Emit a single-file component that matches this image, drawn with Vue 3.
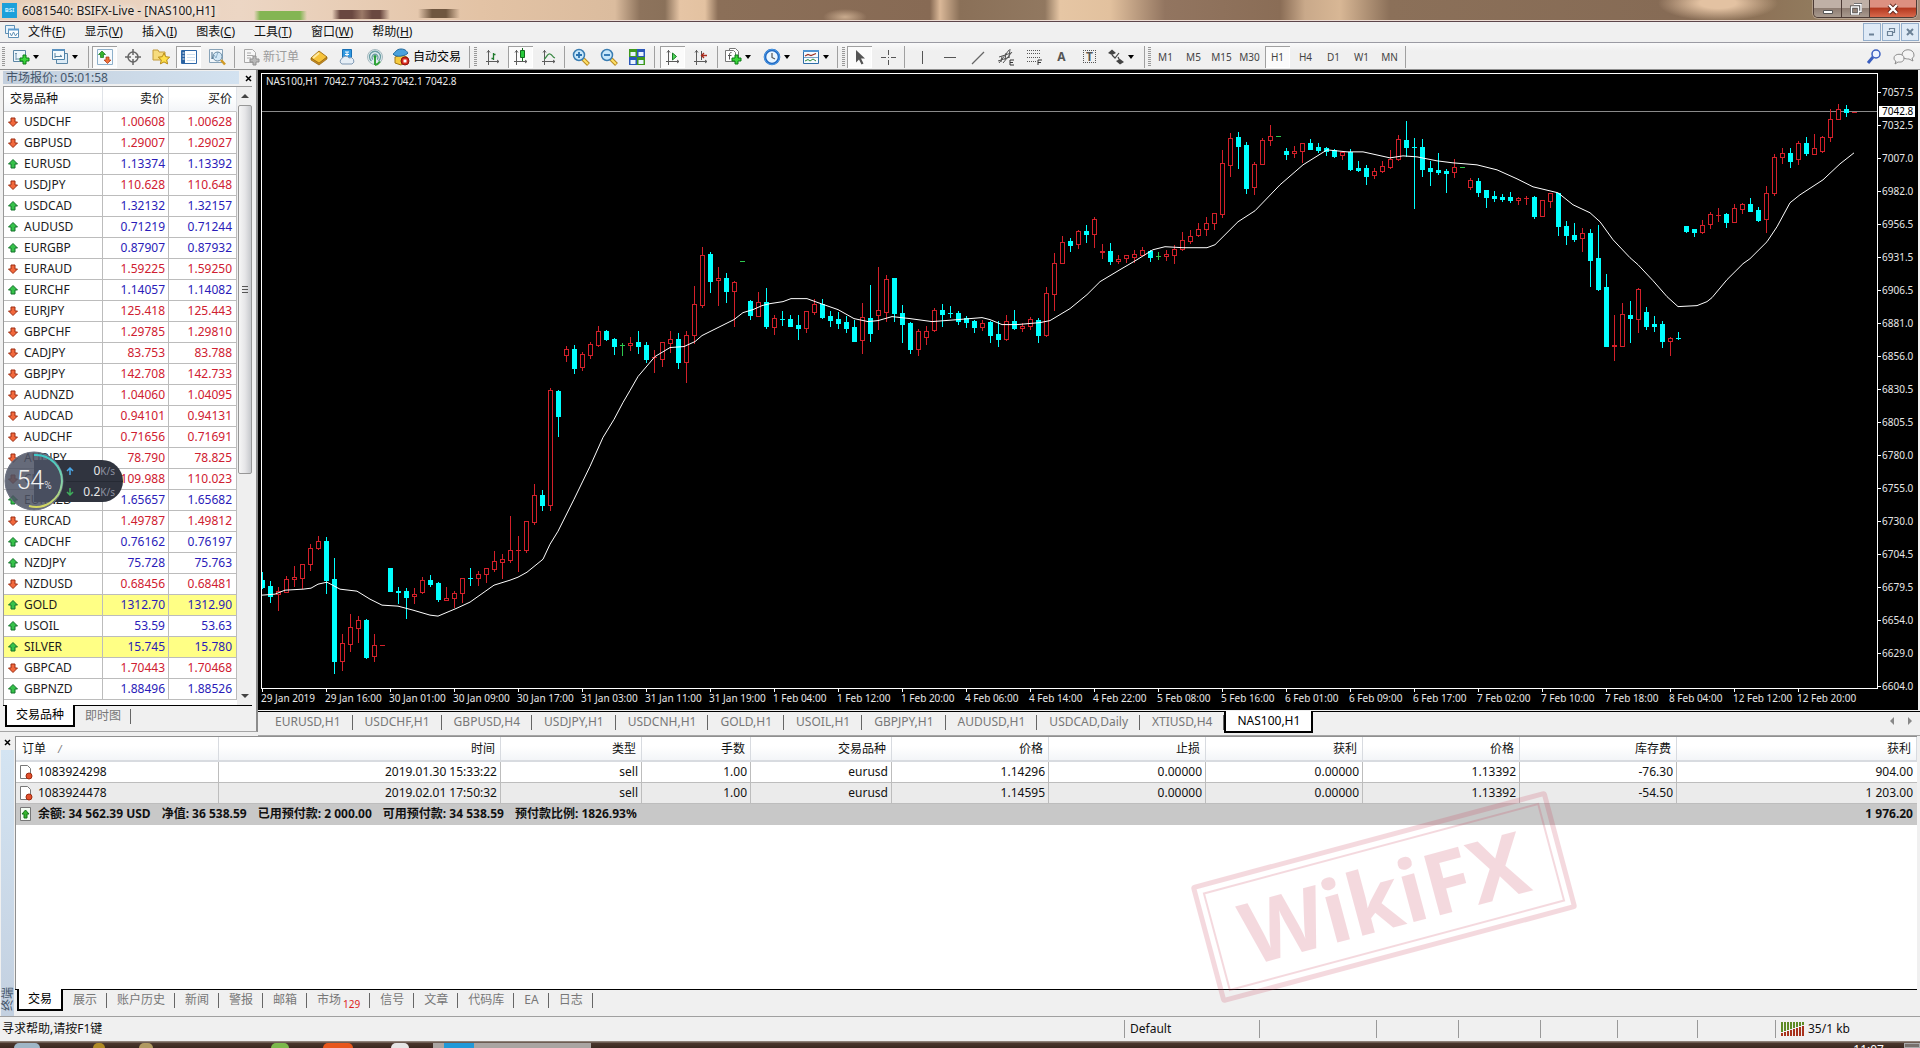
<script setup>
const menus = [['文件', 'F'], ['显示', 'V'], ['插入', 'I'], ['图表', 'C'], ['工具', 'T'], ['窗口', 'W'], ['帮助', 'H']]

const axes = '<path d="M4.5 2v14M2 13.5h13M3 4.5l1.500-2 1.500 2M13 12l2 1.500-2 1.500M4.500 16v1" fill="none" stroke="#5c5c5c"/>'
const plus = '<path d="M11 7h3v3h3v3h-3v3h-3v-3H8v-3h3z" fill="#3bd63b" stroke="#0b7a16"/>'
const icons = {
  chartNew: '<path d="M1.500 2.500h12v11h-12z" fill="#eef6fc" stroke="#5b86a5"/><path d="M4 5v7M3 6l1-1 1 1M4 11h6" stroke="#6f93ad" fill="none"/>' + plus,
  profiles: '<path d="M5.500 5.500h11v10h-11z" fill="#dcebf6" stroke="#5b86a5"/><path d="M1.500 1.500h12v10h-12z" fill="#f4fafd" stroke="#4d81a8"/><path d="M1 2h13" stroke="#5b93c1" stroke-width="2"/><path d="M4 5v5M4 8.500h7M9 7l2 1.500" fill="none" stroke="#5b86a5"/>',
  watch: '<path d="M1.500 1.500h15v15h-15z" fill="#f5fafe" stroke="#8eb0ca"/><path d="M6 3l3.500 3.500H7.500v3h-3v-3H2.500z" fill="#35b52c" stroke="#14751a" stroke-width=".7"/><path d="M11.500 15.500L8 12h2V9h3v3h2z" fill="#f0713a" stroke="#a33413" stroke-width=".7"/>',
  target: '<circle cx="9" cy="9" r="5" fill="none" stroke="#666" stroke-width="1.500"/><path d="M9 1v6M9 11v6M1 9h6M11 9h6" stroke="#666" stroke-width="1.500"/>',
  star: '<path d="M1 2h5l1 2h6v8H1z" fill="#f7dc7d" stroke="#c29a3a"/><path d="M12 5l1.700 3.700 4 .5-3 2.700.9 4-3.600-2-3.600 2 .9-4-3-2.700 4-.5z" fill="#ffe04a" stroke="#b78a16"/>',
  navigator: '<path d="M1.500 2.500h15v13h-15z" fill="#fff" stroke="#2f68a8"/><path d="M2 3h3v12H2z" fill="#2b62a0"/><path d="M7 6.500h8M7 9.500h8M7 12.500h8" stroke="#cfe0ef"/><path d="M2.500 5h2M2.500 8h2M2.500 11h2" stroke="#fff"/>',
  tester: '<path d="M1.500 1.500h13v13h-13z" fill="#f1f6fa" stroke="#88a3b8"/><path d="M4 4v7l2-4 2 3 2-6" fill="none" stroke="#476e8d"/><circle cx="9.500" cy="8.500" r="4.500" fill="#bfe0f5" fill-opacity=".6" stroke="#6a8aa2"/><path d="M13 12l4 4.500" stroke="#d09a25" stroke-width="2.500"/>',
  order: '<path d="M2.500 1.500h8l3 3v10h-11z" fill="#f6f6f6" stroke="#a8a8a8"/><path d="M5 5h4M5 7.500h6M5 10h4" stroke="#a8a8a8"/><path d="M11 8h3v3h3v3h-3v3h-3v-3H8v-3h3z" fill="#b9b9b9" stroke="#8f8f8f"/>',
  book: '<path d="M1 10l8-7 8 6-8 7z" fill="#f6c33b" stroke="#a8771a"/><path d="M1 10v2l8 5 8-6V9l-8 6z" fill="#c98d1e" stroke="#8f6312" stroke-width=".7"/><path d="M3 10l6-5" stroke="#ffeaa0" stroke-width="2"/>',
  cloud: '<path d="M4.500 1.500h9v9h-9z" fill="#2f97e0" stroke="#1870b5"/><path d="M7 4h4M7 6.500h4M9 4v5" stroke="#fff"/><path d="M4 16a3 3 0 0 1 0-5.500 4 4 0 0 1 7-.5 3 3 0 0 1 3 6z" fill="#e6eef6" stroke="#7f98b3"/>',
  signal: '<circle cx="9" cy="9" r="7.500" fill="#e3eef0" stroke="#a7b9bf"/><path d="M5.500 13a5.500 5.500 0 1 1 7 0M7 11.500a3 3 0 1 1 4 0" fill="none" stroke="#6d9ea5" stroke-width="1.300"/><path d="M9 9v8M9 17a8 8 0 0 0 5-3.500" fill="none" stroke="#31a43a" stroke-width="2"/><circle cx="9" cy="8.500" r="1.500" fill="#27983a"/>',
  auto: '<path d="M3 9l6-2 6 2v4l-6 4-6-2z" fill="#f6cb3f" stroke="#a37918"/><path d="M1 6c2-1 3-5 8-5s6 3 7 4c-2 3-12 5-15 1z" fill="#4ba1dc" stroke="#226a9c"/><circle cx="13" cy="13" r="4" fill="#d7281c" stroke="#8d150e"/><path d="M11.500 11.500h3v3h-3z" fill="#fff"/>',
  bars: axes + '<path d="M9.500 5v7M7.500 10.500h2M9.500 6.500h2" stroke="#1f7a2c" fill="none" stroke-width="1.300"/>',
  candles: axes + '<path d="M10.500 0v13" stroke="#136b1c"/><path d="M8.500 2.500h4v7h-4z" fill="#27c93a" stroke="#136b1c"/>',
  line: axes + '<path d="M4 11c3-1 3-6 6-5s2 3 5 4" fill="none" stroke="#3b8a45" stroke-width="1.300"/>',
  zoomIn: '<path d="M11 11l5.500 5.500" stroke="#b98a21" stroke-width="4"/><path d="M11 11l5 5" stroke="#ffe168" stroke-width="2"/><circle cx="7" cy="7" r="5.500" fill="#c8e8fb" stroke="#3a7db2" stroke-width="1.500"/><path d="M7 4v6M4 7h6" stroke="#2a72b0" stroke-width="1.800"/>',
  zoomOut: '<path d="M11 11l5.500 5.500" stroke="#b98a21" stroke-width="4"/><path d="M11 11l5 5" stroke="#ffe168" stroke-width="2"/><circle cx="7" cy="7" r="5.500" fill="#c8e8fb" stroke="#3a7db2" stroke-width="1.500"/><path d="M4 7h6" stroke="#2a72b0" stroke-width="1.800"/>',
  tiles: '<path d="M1 1h8v8H1z" fill="#3f9a1e"/><path d="M9 1h8v8H9z" fill="#2b58ba"/><path d="M1 9h8v8H1z" fill="#2b58ba"/><path d="M9 9h8v8H9z" fill="#3f9a1e"/><path d="M2.500 4h5v4h-5zM10.500 4h5v4h-5zM2.500 12h5v4h-5zM10.500 12h5v4h-5z" fill="#eaf4ff"/>',
  scroll: axes + '<path d="M8.500 5l4 3.500-4 3.500z" fill="#4fd65b" stroke="#1b7d27"/>',
  shift: axes + '<path d="M9.500 3v9" stroke="#555"/><path d="M15 7.500h-5M12 5l-2.500 2.500L12 10" fill="none" stroke="#a72a1c" stroke-width="1.300"/>',
  indicator: '<path d="M5.500 3.500V.5h6l3 3v9h-3" fill="#fff" stroke="#777"/><path d="M1.500 2.500h8l2 2v9h-10z" fill="#fff" stroke="#777"/><path d="M7.500 4.500c-2 0-2 1-2 3v4M4 7.500h3.500" fill="none" stroke="#555"/>' + plus,
  clock: '<circle cx="9" cy="9" r="7" fill="#eaf6ff" stroke="#1e66c0" stroke-width="2.600"/><circle cx="9" cy="9" r="7.500" fill="none" stroke="#59aaf0" stroke-width=".8"/><path d="M9 5v4.500l3 1.500" fill="none" stroke="#555" stroke-width="1.200"/>',
  template: '<path d="M1.500 2.500h15v13h-15z" fill="#f7fbff" stroke="#2f6ea9"/><path d="M1 3h16" stroke="#4f94d2" stroke-width="2"/><path d="M3 8l3-1.500 3 1 5-2" fill="none" stroke="#9a3325" stroke-width="1.200"/><path d="M2 9.500h14" stroke="#7aa4c8"/><path d="M3 13l3-1.500 2 1.500 3-2 3 2" fill="none" stroke="#2c8a3a"/>',
  cursor: '<path d="M5 2l9 8.500H10l2.500 5-2 1-2.500-5-3 3z" fill="#555"/>',
  cross: '<path d="M9.500 2v5M9.500 12v5M2 9.500h5M12 9.500h5" stroke="#555"/><path d="M9 9h1v1H9z" fill="#555"/>',
  vline: '<path d="M9.500 3v13" stroke="#555"/>',
  hline: '<path d="M3 9.500h12" stroke="#555"/>',
  trend: '<path d="M3 16L15 4" stroke="#666" stroke-width="1.200"/>',
  channel: '<path d="M2 15L12 2M6 15L15 4M2 9l12-4M1 13l12-4M5 8l-1 6M9 5l-1 7M13 1l-1 8" fill="none" stroke="#555"/><path d="M13 12h4M13 14.500h3M13 17h4M13 12v5" stroke="#333" fill="none"/>',
  fib: '<path d="M2 2.500h14M2 5.500h14M2 9.500h14M2 13.500h9" stroke="#555" stroke-dasharray="1 1"/><path d="M13 12v5M13 12h4M13 14.500h3" stroke="#333" fill="none"/>',
  arrows: '<path d="M1 5l4-3.500L9 5 5 7zM9 13l4-2 4 3-4 2.500z" fill="#444"/><path d="M5 7l3 3 4-5M11 9l2 4" fill="none" stroke="#444" stroke-width="1.200"/>',
}

// w: slot width; kind: grip | sep; drop: has a caret; on: pressed state
const tools = [
  { kind: 'grip', w: 8 },
  { icon: 'chartNew', drop: 1, w: 39, label: 'New chart' }, { icon: 'profiles', drop: 1, w: 39, label: 'Profiles' },
  { kind: 'sep', w: 4 },
  { icon: 'watch', on: 1, label: 'Market watch' }, { icon: 'target', label: 'Data window' }, { icon: 'star', label: 'Favourites' },
  { icon: 'navigator', on: 1, label: 'Terminal' }, { icon: 'tester', label: 'Strategy tester' },
  { kind: 'sep', w: 8 },
  { icon: 'order', text: '新订单', w: 66, off: 1 }, { icon: 'book', label: 'MetaEditor' }, { icon: 'cloud', label: 'Cloud' },
  { icon: 'signal', label: 'Signals' }, { icon: 'auto', text: '自动交易', w: 78 },
  { kind: 'sep', w: 6 }, { kind: 'grip', w: 6 },
  { icon: 'bars', label: 'Bars' }, { icon: 'candles', on: 1, label: 'Candles' }, { icon: 'line', label: 'Line' },
  { kind: 'sep', w: 4 },
  { icon: 'zoomIn', label: 'Zoom in' }, { icon: 'zoomOut', label: 'Zoom out' }, { icon: 'tiles', label: 'Tile windows' },
  { kind: 'sep', w: 8 },
  { icon: 'scroll', on: 1, label: 'Auto scroll' }, { icon: 'shift', label: 'Chart shift' },
  { kind: 'sep', w: 6 },
  { icon: 'indicator', drop: 1, w: 39, label: 'Indicators' }, { icon: 'clock', drop: 1, w: 39, label: 'Periods' }, { icon: 'template', drop: 1, w: 37, label: 'Templates' },
  { kind: 'sep', w: 5 }, { kind: 'grip', w: 5 },
  { icon: 'cursor', on: 1, label: 'Cursor' }, { icon: 'cross', label: 'Crosshair' },
  { kind: 'sep', w: 6 },
  { icon: 'vline', label: 'Vertical line' }, { icon: 'hline', label: 'Horizontal line' }, { icon: 'trend', label: 'Trendline' },
  { icon: 'channel', label: 'Channel' }, { icon: 'fib', label: 'Fibonacci' },
  { glyph: 'A' }, { glyph: 'T', boxed: 1 }, { icon: 'arrows', drop: 1, w: 39, label: 'Arrows' },
  { kind: 'sep', w: 4 }, { kind: 'grip', w: 5 },
  ...['M1', 'M5', 'M15', 'M30', 'H1', 'H4', 'D1', 'W1', 'MN'].map(p => ({ period: p, on: p === 'H1' })),
  { kind: 'sep', w: 4 },
]

const quotes = `USDCHF d 1.00608 1.00628
GBPUSD d 1.29007 1.29027
EURUSD u 1.13374 1.13392
USDJPY d 110.628 110.648
USDCAD u 1.32132 1.32157
AUDUSD u 0.71219 0.71244
EURGBP u 0.87907 0.87932
EURAUD d 1.59225 1.59250
EURCHF u 1.14057 1.14082
EURJPY d 125.418 125.443
GBPCHF d 1.29785 1.29810
CADJPY d 83.753 83.788
GBPJPY d 142.708 142.733
AUDNZD d 1.04060 1.04095
AUDCAD d 0.94101 0.94131
AUDCHF d 0.71656 0.71691
AUDJPY d 78.790 78.825
CHFJPY d 109.988 110.023
EURNZD u 1.65657 1.65682
EURCAD d 1.49787 1.49812
CADCHF u 0.76162 0.76197
NZDJPY u 75.728 75.763
NZDUSD d 0.68456 0.68481
GOLD u 1312.70 1312.90
USOIL u 53.59 53.63
SILVER u 15.745 15.780
GBPCAD d 1.70443 1.70468
GBPNZD u 1.88496 1.88526`.split('\n').map(r => {
  const [name, dir, bid, ask] = r.split(' ')
  return { name, dir, bid, ask, hot: name === 'GOLD' || name === 'SILVER' }
})

// r: rising, c: falling, g: unchanged; values are high, body top, body bottom, low
const candles = `c573,581,588,589 c582,587,597,603 r588,592,595,611 r577,580,593,593 r567,578,580,587 r565,565,579,589 r545,549,565,571 r537,542,549,550
c538,542,581,594 c559,580,662,674 r635,644,662,671 r615,628,645,652 r617,621,629,643 c620,621,658,659 r635,646,657,662 r646,646,646,646
c569,569,592,592 c588,592,593,604 c589,592,598,619 r589,595,597,604 r578,581,593,594 c576,581,585,587 c583,584,600,602 r588,599,601,601
r592,594,599,608 r579,579,594,603 c569,579,579,586 r572,575,579,586 r569,569,575,583 r552,562,570,572 r555,560,563,579 r517,551,561,563
r537,551,551,572 r522,522,551,553 r485,496,523,525 c491,496,506,511 r389,391,506,511 c391,392,417,437 r346,349,355,361 c345,349,368,373
r352,354,367,370 r342,344,355,358 r326,331,345,346 c330,331,339,340 c338,339,346,354 g343,345,345,355 r337,343,345,350 c331,342,346,353
c342,345,359,362 r350,357,357,372 r342,342,359,366 r331,339,343,352 c333,339,362,368 r331,335,362,383 r286,304,335,343 r247,255,305,307
c252,254,281,292 r267,278,280,305 c273,278,291,302 r281,282,291,326 g261,261,261,261 c300,301,315,319 r292,302,316,316 c288,302,326,328
r315,318,327,334 c311,319,319,325 c315,319,326,326 c315,325,328,339 r311,311,328,332 r299,304,312,314 c299,304,317,318 c311,316,320,326
c312,319,323,328 c316,322,328,332 c320,327,341,341 r303,317,340,353 c285,318,333,341 r267,310,315,329 r275,279,312,321 c278,278,313,321
c305,313,324,342 c322,323,349,353 r329,331,349,355 r326,331,337,344 r308,310,330,331 c304,310,314,326 c306,313,313,317 c311,313,321,324
c316,318,322,327 c320,321,327,332 r320,323,327,330 c321,322,335,342 c321,334,339,346 r315,321,339,340 c310,321,328,329 r323,326,328,331
r317,319,326,329 c318,320,335,342 r287,293,335,336 r253,263,294,310 r236,242,263,263 c238,241,245,251 r230,231,244,248 c225,231,234,242
r217,219,234,247 r244,251,252,258 c243,251,261,264 r255,259,261,263 r255,255,258,262 r250,254,257,262 r247,250,255,255 c250,251,257,261
g252,256,256,259 r250,254,256,260 r245,249,255,263 r232,240,249,250 r230,236,241,243 r223,229,235,236 r217,223,229,235 r213,213,223,229
r150,163,214,217 r133,138,165,176 c132,137,146,168 c142,145,188,193 r162,164,187,194 r138,140,164,164 r125,136,140,145 g136,136,136,136
c148,151,154,159 r146,151,153,157 r143,143,151,162 c139,143,149,149 c143,147,150,152 c147,148,151,155 c149,150,156,157 r151,152,155,159
c149,152,169,170 c161,168,170,171 c165,168,176,184 r168,171,175,178 r161,166,171,172 r150,159,167,168 r135,139,159,160 c121,140,147,156
c138,147,147,208 c139,147,169,176 c161,168,171,185 c153,170,172,174 c169,171,173,192 r159,167,172,177 g167,167,167,167 r178,180,187,189
c178,181,192,196 c190,190,197,207 c191,196,198,201 c194,197,199,201 c192,197,200,202 r197,198,200,204 r196,198,198,204 c196,197,216,218
r200,200,216,216 r193,193,201,207 c193,193,226,235 c221,226,235,244 c223,235,239,241 r228,233,238,251 c229,233,260,286 c225,258,289,290
c274,287,346,346 r315,345,346,360 r303,314,346,346 c301,315,318,342 r288,289,319,332 c307,312,326,329 c316,324,326,331 c321,324,341,347
r337,338,341,355 c332,338,338,339 c226,226,231,232 c229,229,232,236 r220,225,232,233 r212,214,224,228 r208,215,215,221 c213,214,222,227
r204,208,222,222 r203,204,209,213 c198,204,211,211 c207,210,220,221 r186,193,219,232 r154,157,193,195 r148,153,157,163 c148,153,161,167
r141,143,159,164 c137,143,153,155 r134,148,154,154 r136,137,151,152 r109,119,137,141 r104,109,119,119 c105,109,112,116 r112,112,112,112`
  .split(/\s+/).map((s, i) => {
    const [hi, top, bot, lo] = s.slice(1).split(',').map(Number)
    return { kind: s[0], hi, top, bot, lo, x: 262 + i * 8 }
  })

const average = '262,596 275,595 285,591 303,590 311,589 318,585 327,583 340,590 357,592 370,600 382,606 398,607 413,611 430,616 438,617 457,609 470,603 494,586 510,581 518,578 527,573 543,560 550,545 558,532 574,500 590,467 603,438 614,420 623,403 630,391 638,377 655,357 670,348 684,347 695,342 702,336 734,320 743,313 753,310 762,306 770,304 783,302 791,299 807,299 818,303 838,310 854,319 868,322 878,321 892,317 910,319 932,322 945,321 958,320 982,318 990,320 1002,325 1017,325 1040,323 1050,321 1070,309 1087,295 1100,282 1120,270 1137,260 1153,250 1165,247 1183,248 1207,248 1215,245 1223,237 1238,222 1255,211 1280,185 1303,165 1327,150 1347,152 1363,152 1390,158 1403,156 1417,157 1437,161 1453,163 1477,165 1497,170 1517,179 1533,187 1558,193 1573,205 1590,213 1600,222 1613,240 1630,258 1638,265 1653,281 1667,297 1678,307 1697,306 1707,302 1712,298 1727,280 1743,264 1750,259 1767,242 1777,227 1790,203 1800,195 1823,180 1840,164 1854,153'

const prices = ['7057.5', '7032.5', '7007.0', '6982.0', '6956.5', '6931.5', '6906.5', '6881.0', '6856.0', '6830.5', '6805.5', '6780.0', '6755.0', '6730.0', '6704.5', '6679.5', '6654.0', '6629.0', '6604.0']
const times = ['29 Jan 2019', '29 Jan 16:00', '30 Jan 01:00', '30 Jan 09:00', '30 Jan 17:00', '31 Jan 03:00', '31 Jan 11:00', '31 Jan 19:00', '1 Feb 04:00', '1 Feb 12:00', '1 Feb 20:00', '4 Feb 06:00', '4 Feb 14:00', '4 Feb 22:00', '5 Feb 08:00', '5 Feb 16:00', '6 Feb 01:00', '6 Feb 09:00', '6 Feb 17:00', '7 Feb 02:00', '7 Feb 10:00', '7 Feb 18:00', '8 Feb 04:00', '12 Feb 12:00', '12 Feb 20:00']
const chartTabs = ['EURUSD,H1', 'USDCHF,H1', 'GBPUSD,H4', 'USDJPY,H1', 'USDCNH,H1', 'GOLD,H1', 'USOIL,H1', 'GBPJPY,H1', 'AUDUSD,H1', 'USDCAD,Daily', 'XTIUSD,H4', 'NAS100,H1']

const columns = [['时间', 282], ['类型', 141], ['手数', 109], ['交易品种', 141], ['价格', 157], ['止损', 157], ['获利', 157], ['价格', 157], ['库存费', 157], ['获利', null]]
const orders = [
  ['1083924298', '2019.01.30 15:33:22', 'sell', '1.00', 'eurusd', '1.14296', '0.00000', '0.00000', '1.13392', '-76.30', '904.00'],
  ['1083924478', '2019.02.01 17:50:32', 'sell', '1.00', 'eurusd', '1.14595', '0.00000', '0.00000', '1.13392', '-54.50', '1 203.00'],
]
const balance = ['余额: 34 562.39 USD', '净值: 36 538.59', '已用预付款: 2 000.00', '可用预付款: 34 538.59', '预付款比例: 1826.93%']
const terminalTabs = ['交易', '展示', '账户历史', '新闻', '警报', '邮箱', '市场', '信号', '文章', '代码库', 'EA', '日志']
const statusWidths = [117, 82, 82, 77, 80, 78]
</script>

<template>
  <div class="app">
    <header class="titlebar">
      <span class="logo">BSI</span>
      <h1>6081540: BSIFX-Live - [NAS100,H1]</h1>
      <div class="winbtns">
        <button aria-label="Minimize"><svg width="12" height="12"><path d="M1.500 7.500h9v3h-9z" fill="#fff" stroke="#555" /></svg></button>
        <button aria-label="Restore"><svg width="12" height="12"><path d="M4 1.500h7v7H8M1.500 4h7v7h-7z" fill="none" stroke="#444" stroke-width="3" /><path d="M4 1.500h7v7H8M1.500 4h7v7h-7z" fill="none" stroke="#fff" stroke-width="1.500" /></svg></button>
        <button class="quit" aria-label="Close"><svg width="12" height="12"><path d="M2 2l8 8M10 2l-8 8" stroke="#5a2018" stroke-width="4" /><path d="M2 2l8 8M10 2l-8 8" stroke="#fff" stroke-width="2.400" /></svg></button>
      </div>
    </header>

    <nav class="menubar">
      <svg class="menuicon" width="16" height="16"><path d="M1.500 1.500h9v8h-9z" fill="#e8f3fb" stroke="#5d8fb5" /><path d="M4.500 5.500h10v8h-10z" fill="#fff" stroke="#5d8fb5" /><path d="M4 5.500h11" stroke="#5d9cd0" stroke-width="2" /><path d="M6 9l1.500 3 2-4 2 4 2-3" fill="none" stroke="#5d8fb5" /></svg>
      <button v-for="[m, k] in menus" :key="k">{{ m }}(<u>{{ k }}</u>)</button>
      <div class="mdi">
        <button aria-label="Minimize chart"><svg width="10" height="10"><path d="M2 7.500h5" stroke="#6b8196" stroke-width="2" /></svg></button>
        <button aria-label="Restore chart"><svg width="10" height="10"><path d="M3.500 3V1.500h5v4H7M1.500 4.500h5v4h-5zM1 4.500h6M3 1.500h6" fill="none" stroke="#6b8196" stroke-width="1.200" /></svg></button>
        <button aria-label="Close chart"><svg width="10" height="10"><path d="M2 2l6 6M8 2l-6 6" stroke="#6b8196" stroke-width="2" /></svg></button>
      </div>
    </nav>

    <div class="toolbar">
      <template v-for="(t, i) in tools" :key="i">
        <span v-if="t.kind" :class="t.kind" :style="{ width: t.w + 'px' }"></span>
        <button v-else class="tool" :class="{ on: t.on, off: t.off, wide: t.drop || t.text, period: t.period }" :style="{ width: (t.w || 28) + 'px' }" :aria-label="t.label">
          <svg v-if="t.icon" width="18" height="18" v-html="icons[t.icon]"></svg>
          <b v-if="t.glyph" :class="{ boxed: t.boxed }">{{ t.glyph }}</b>
          <template v-if="t.period">{{ t.period }}</template>
          <span v-if="t.text">{{ t.text }}</span>
          <i v-if="t.drop" class="caret"></i>
        </button>
      </template>
      <div class="right">
        <button class="tool" aria-label="Search"><svg width="18" height="18"><circle cx="11" cy="6" r="4" fill="#eef4ff" stroke="#3b5fc0" stroke-width="1.500" /><path d="M8 9l-5 6" stroke="#3b5fc0" stroke-width="3" /></svg></button>
        <button class="tool" aria-label="Chat"><svg width="22" height="18"><path d="M9 7c0-7 12-7 12 0 0 2-1 3-2 3l1 3-4-2c-4 0-7-1-7-4z" fill="#f4f4f4" stroke="#8d8d8d" /><path d="M1 10c0-5 10-5 10 0s-5 4-6 4l-3 2 1-3c-1 0-2-1-2-3z" fill="#f4f4f4" stroke="#8d8d8d" /></svg></button>
      </div>
    </div>

    <main class="workspace">
      <aside class="watch">
        <div class="panelhead"><span>市场报价: 05:01:58</span><button aria-label="Close panel"><svg width="7" height="7"><path d="M1 1l5 5M6 1l-5 5" stroke="#000" stroke-width="1.500" /></svg></button></div>
        <div class="quotes">
          <table>
            <thead><tr><th>交易品种</th><th>卖价</th><th>买价</th></tr></thead>
            <tbody>
              <tr v-for="q in quotes" :key="q.name" :class="[q.dir, { hot: q.hot }]">
                <td><span class="sym"><svg width="10" height="10"><path :d="q.dir === 'u' ? 'M5 .5l4.500 4.500H7v4H3V5H.5z' : 'M5 9.500L.5 5H3V1h4v4h2.500z'" :fill="q.dir === 'u' ? '#36c24a' : '#f2683c'" :stroke="q.dir === 'u' ? '#12702a' : '#9c2c12'" /></svg>{{ q.name }}</span></td>
                <td>{{ q.bid }}</td><td>{{ q.ask }}</td>
              </tr>
            </tbody>
          </table>
          <div class="scroll">
            <i class="up"></i><div class="thumb"><i></i><i></i><i></i></div><div class="track"></div><i class="down"></i>
          </div>
        </div>
        <div class="tabs"><button class="active">交易品种</button><button>即时图</button></div>

        <div class="gauge">
          <div class="rates">
            <p><svg width="8" height="8"><path d="M4 8V1M1 4l3-3 3 3" fill="none" stroke="#4aa8e8" stroke-width="1.500" /></svg><span>0<small>K/s</small></span></p>
            <p><svg width="8" height="8"><path d="M4 0v7M1 4l3 3 3-3" fill="none" stroke="#3fae5c" stroke-width="1.500" /></svg><span>0.2<small>K/s</small></span></p>
          </div>
          <div class="dial">
            <svg width="60" height="60" viewBox="0 0 60 60">
              <defs><linearGradient id="ring" x1="0" y1="0" x2="0" y2="1"><stop offset="0" stop-color="#3cc8c8" /><stop offset=".6" stop-color="#8fd3a0" /><stop offset="1" stop-color="#d8d860" /></linearGradient></defs>
              <circle cx="30" cy="30" r="29" fill="#4d5364" fill-opacity=".86" stroke="#6b7080" />
              <path d="M30 4a26 26 0 1 1-5 51" fill="none" stroke="url(#ring)" stroke-width="2" />
            </svg>
            <strong>54<small>%</small></strong>
          </div>
        </div>
      </aside>

      <section class="chart">
        <div class="board">
          <div class="plot">
            <span class="caption">NAS100,H1&nbsp; 7042.7 7043.2 7042.1 7042.8</span>
            <svg viewBox="262 74 1615 615" preserveAspectRatio="none" shape-rendering="crispEdges">
              <rect x="262" y="111" width="1615" height="1" fill="#8a8a8a" />
              <g v-for="c in candles" :key="c.x" :class="c.kind">
                <rect :x="c.x" :y="c.hi" width="1" :height="c.lo - c.hi + 1" />
                <rect :x="c.x - 2" :y="c.top" width="5" :height="c.bot - c.top + 1" />
                <rect v-if="c.kind === 'r' && c.bot - c.top > 1" :x="c.x - 1" :y="c.top + 1" width="3" :height="c.bot - c.top - 1" class="hole" />
              </g>
              <polyline :points="average" fill="none" stroke="#fff" />
            </svg>
          </div>
          <div class="prices">
            <span v-for="p in prices" :key="p">{{ p }}</span>
            <b>7042.8</b>
          </div>
          <div class="times"><span v-for="t in times" :key="t">{{ t }}</span></div>
        </div>
        <div class="tabs charttabs">
          <button v-for="t in chartTabs" :key="t" :class="{ active: t === 'NAS100,H1' }">{{ t }}</button>
          <span class="pager"><i class="prev"></i><i class="next"></i></span>
        </div>
      </section>
    </main>

    <section class="terminal">
      <div class="rail">
        <button aria-label="Close terminal"><svg width="7" height="7"><path d="M1 1l5 5M6 1l-5 5" stroke="#000" stroke-width="1.500" /></svg></button>
        <span>终端</span>
      </div>
      <div class="pane">
        <div class="sheet">
          <table>
            <colgroup><col style="width: 203px"><col v-for="(c, i) in columns" :key="i" :style="c[1] ? { width: c[1] + 'px' } : {}"></colgroup>
            <thead><tr><th>订单<em>/</em></th><th v-for="(c, i) in columns" :key="i">{{ c[0] }}</th></tr></thead>
            <tbody>
              <tr v-for="o in orders" :key="o[0]">
                <td v-for="(v, i) in o" :key="i"><svg v-if="!i" width="14" height="16"><path d="M1.500 1.500h7l3 3v10h-10z" fill="#fff" stroke="#777" /><circle cx="10" cy="12" r="3" fill="#e2502c" stroke="#9c2a10" /></svg>{{ v }}</td>
              </tr>
              <tr class="sum">
                <td colspan="10"><svg width="14" height="16"><path d="M1.500 1.500h10v13h-10z" fill="#f2fbf2" stroke="#777" /><path d="M6.500 4L10 8H8v4H5V8H3z" fill="#35b52c" stroke="#14751a" /></svg><span v-for="b in balance" :key="b">{{ b }}</span></td>
                <td>1 976.20</td>
              </tr>
            </tbody>
          </table>
        </div>
        <div class="tabs">
          <button v-for="t in terminalTabs" :key="t" :class="{ active: t === '交易' }">{{ t }}<sub v-if="t === '市场'">129</sub></button>
        </div>
      </div>
      <div class="stamp"><div>WikiFX</div></div>
    </section>

    <footer class="status">
      <span class="help">寻求帮助,请按F1键</span>
      <span class="cell" style="width: 135px">Default</span>
      <span v-for="(w, i) in statusWidths" :key="i" class="cell" :style="{ width: w + 'px' }"></span>
      <span class="cell net">
        <svg width="24" height="14"><path v-for="n in 8" :key="n" :d="`M${n * 3 - 2} 0v${11 - n}`" stroke="#5d8a25" stroke-width="2" /><path v-for="n in 8" :key="'d' + n" :d="`M${n * 3 - 2} 14v${-2 - n}`" stroke="#a8321c" stroke-width="2" /></svg>
        35/1 kb
      </span>
    </footer>

    <div class="taskbar">
      <i class="orb"></i><i class="pin gold"></i><i class="pin folder"></i><i class="pin leaf"></i><i class="pin orange"></i><i class="pin white"></i>
      <span class="task"><i></i></span>
      <span class="clock">11:07</span><i class="desk"></i>
    </div>
  </div>
</template>

<style>
body { margin: 0; background: #f0f0f0; }
</style>

<style scoped>
.app { display: flex; flex-direction: column; height: 100vh; min-height: 1000px; overflow: hidden; background: #f0f0f0; color: #111; font: 12px/16px "Noto Sans", "Noto Sans CJK SC", sans-serif; }
.app *, .app *::before { box-sizing: border-box; }
button { border: 0; background: none; padding: 0; margin: 0; font: inherit; color: inherit; cursor: default; }
svg { display: block; flex: none; }

.titlebar { flex: none; display: flex; align-items: center; height: 22px; padding: 0 3px 0 2px; border-bottom: 1px solid #5d464a; box-shadow: inset 0 -1px #ecdcd4;
  background:
    linear-gradient(90deg, transparent 254px, #84b553 260px 300px, transparent 307px) 0 11px / 100% 9px no-repeat,
    linear-gradient(90deg, transparent 332px, #6a4840 340px 352px, #9c7a68 362px, #6a4840 372px 380px, transparent 390px) 0 10px / 100% 9px no-repeat,
    linear-gradient(90deg, transparent 418px, #6f563f 432px 446px, transparent 460px) 0 9px / 100% 9px no-repeat,
    radial-gradient(ellipse 60px 18px at 1718px 3px, #e3c2a2 30%, transparent),
    radial-gradient(ellipse 22px 8px at 845px 17px, #c9ab8e, transparent),
    linear-gradient(90deg, #e6cdb6 0, #ecd6c4 240px, #e3c3a5 480px, #dbbc9e 615px, #8d735c 640px, #8a715a 665px, #e6c5a5 680px, #e3c2a1 705px, #8b6f58 718px, #876a54 930px, #dab898 940px, #8a7058 960px, #917860 1045px, #e6c6a4 1060px, #e2c19e 1110px, #927560 1165px, #8a6d56 1280px, #c9a98a 1305px, #d8b795 1340px, #8b7059 1390px, #866b55 1670px, #8d7257 1760px, #917a5d 1810px, #a58d7a 1920px); }
.logo { width: 15px; height: 15px; background: #1ba0da; color: #cdefff; font-size: 6px; line-height: 15px; font-weight: 700; text-align: center; }
h1 { margin: 0 0 0 5px; font-size: 12px; font-weight: 400; line-height: 20px; color: #1a1a1a; text-shadow: 0 0 6px #fff, 0 0 8px #fff; }
.winbtns { margin-left: auto; align-self: flex-start; display: flex; height: 18px; border: 1px solid #4c3b35; border-top: 0; border-radius: 0 0 5px 5px; overflow: hidden; box-shadow: 0 0 0 1px #e2d3c866; }
.winbtns button { width: 28px; display: grid; place-items: center; background: linear-gradient(#bfb0a6 45%, #8e7d72 50%, #a89a8f); border-right: 1px solid #4c3b35; }
.winbtns .quit { width: 46px; border: 0; background: linear-gradient(#dd9080 40%, #b53a20 50%, #d8684c); }

.menubar { flex: none; display: flex; align-items: center; gap: 19px; height: 21px; padding: 0 1px 0 4px; border-bottom: 1px solid #9b9ba3; }
.menuicon { margin-right: -11px; }
.mdi { margin-left: auto; display: flex; gap: 1px; }
.mdi button { width: 18px; height: 18px; display: grid; place-items: center; background: #dfeaf6; border: 1px solid #94aecb; }

.toolbar { flex: none; display: flex; align-items: center; height: 27px; padding-top: 1px; background: linear-gradient(#fafafa, #f0f0f0 30%); border-bottom: 1px solid #8f8f8f; }
.tool { flex: none; height: 22px; display: flex; align-items: center; justify-content: center; color: #333; background-clip: padding-box; border: solid transparent; border-width: 0 1px 0 2px; }
.tool.on { background-color: #fbfbfb; box-shadow: inset 1px 1px #a0a0a0, inset -1px -1px #fff; }
.wide { justify-content: flex-start; padding-left: 2px; gap: 3px; color: #000; }
.wide.off { color: #9b9b9b; }
.period { font-size: 10px; color: #444; }
.tool b { font-size: 12px; color: #555; }
.boxed { width: 13px; height: 13px; line-height: 12px; border: 1px dotted #555; }
.caret { border: 3px solid transparent; border-top: 4px solid #000; border-bottom: 0; }
.grip { flex: none; height: 19px; background: repeating-linear-gradient(#999 0 1px, transparent 1px 2px) 2px 0 / 3px 100% no-repeat; }
.sep { flex: none; height: 22px; background: linear-gradient(#a0a0a0, #a0a0a0) 50% 0 / 1px 100% no-repeat; }
.right { margin-left: auto; display: flex; gap: 2px; padding-right: 3px; }
.right .tool { width: 28px; }

.workspace { flex: none; display: flex; height: 666px; }
.watch { position: relative; flex: none; width: 258px; display: flex; flex-direction: column; padding: 1px 4px 4px 3px; border-right: 2px solid #8c8c8c; border-bottom: 1px solid #a5a5a5; margin-bottom: 4px; }
.panelhead { display: flex; justify-content: space-between; height: 15px; line-height: 14px; color: #44566b; }
.panelhead span { flex: 1; padding-left: 3px; background: linear-gradient(90deg, #c3cfdd, #d3e2f0); height: 13px; margin-right: 5px; }
.panelhead button { width: 8px; display: grid; place-items: center; }
.quotes { flex: 1; display: flex; min-height: 0; overflow: hidden; background: #fff; border: solid #999; border-width: 1px 0 0 1px; }
table { border-spacing: 0; table-layout: fixed; }
th { font-weight: 400; padding: 0; background: linear-gradient(#fff 40%, #f3f5f8); }
.quotes table { width: 233px; align-self: flex-start; flex: none; }
.quotes th { height: 25px; border-bottom: 1px solid #c8c8c8; border-right: 1px solid #e0e3e8; text-align: right; padding-right: 4px; }
.quotes th:first-child { width: 99px; text-align: left; padding-left: 6px; }
.quotes th:nth-child(2) { width: 66px; }
.quotes td { height: 21px; padding: 0 3px 0 0; border: solid #bcbcbc; border-width: 0 1px 1px 0; text-align: right; line-height: 18px; }
.quotes td:last-child { padding-right: 4px; }
.sym { display: flex; align-items: center; gap: 6px; padding-left: 4px; color: #1c1c1c; }
.d td { color: #cf2030; }
.u td { color: #2a1cb8; }
.hot td { background: #ffff85; }
.scroll { width: 17px; display: flex; flex-direction: column; align-items: center; background: #efefef; padding: 7px 1px; }
.up { border: 4px solid transparent; border-bottom-color: #444; border-top: 0; }
.down { border: 4px solid transparent; border-top-color: #444; border-bottom: 0; }
.thumb { width: 14px; height: 369px; margin-top: 7px; border: 1px solid #979797; border-radius: 2px; background: linear-gradient(90deg, #f6f6f6, #e6e6e8 50%, #c6c8cc); display: flex; flex-direction: column; align-items: center; justify-content: center; gap: 2px; }
.thumb i { width: 6px; height: 1px; background: #555; }
.track { flex: 1; }

.tabs { flex: none; display: flex; height: 22px; border-top: 1px solid #000; line-height: 18px; color: #777; padding-left: 2px; }
.tabs button { position: relative; padding: 0 10px; height: 20px; display: flex; align-items: center; }
.tabs button:not(.active)::after { content: ""; position: absolute; right: 0; top: 3px; width: 1px; height: 15px; background: #666; }
.tabs .active { background: #fff; color: #000; border: solid #000; border-width: 0 2px 2px; height: 22px; margin-top: -1px; padding: 0 9px; }
.tabs sub { color: #d22; align-self: flex-end; line-height: 12px; padding-left: 2px; }

.gauge { position: absolute; left: 4px; top: 381px; width: 120px; height: 60px; }
.rates { position: absolute; left: 30px; top: 9px; width: 89px; height: 42px; border-radius: 0 21px 21px 0; background: #30343f; color: #e8e8e8; padding-left: 32px; }
.rates p { margin: 0; height: 21px; display: flex; align-items: center; justify-content: space-between; padding-right: 8px; }
.rates p + p { border-top: 1px solid #262a34; }
.rates small { font-size: 10px; color: #8b90a0; }
.dial { position: absolute; inset: 0 auto 0 0; width: 60px; }
.dial strong { position: absolute; inset: 0; display: flex; justify-content: center; align-items: center; font: 300 25px/60px Roboto, sans-serif; color: #f2f2f2; }
.dial small { font-size: 10px; line-height: 10px; margin-top: 10px; color: #fff; }

.chart { flex: 1; min-width: 0; display: flex; flex-direction: column; }
.board { flex: 1; min-height: 0; display: grid; grid-template: minmax(0, 1fr) 21px / minmax(0, 1fr) 40px; background: #000; color: #e8e8e8; font-size: 10px; padding: 3px 0 0 3px; margin-right: 2px; }
.plot { position: relative; border: 1px solid #fff; }
.plot svg { width: 100%; height: 100%; }
.caption { position: absolute; left: 4px; top: 0; line-height: 15px; }
.r rect { fill: #d3202a; }
.c rect { fill: #0ff; }
.g rect { fill: #2ec84e; }
.r .hole { fill: #000; }
.prices { position: relative; grid-row: span 2; padding-top: 3px; }
.prices span { display: block; height: 33px; line-height: 33px; padding-left: 1px; }
.prices span::before { content: ""; display: inline-block; width: 3px; height: 1px; margin: 0 1px 3px -1px; background: #fff; }
.prices b { position: absolute; left: 1px; top: 33px; width: 36px; height: 11px; line-height: 11px; padding-left: 3px; background: #fff; color: #000; font-weight: 400; }
.times { display: flex; overflow: hidden; }
.times span { position: relative; flex: none; width: 64px; line-height: 19px; white-space: nowrap; }
.times span::before { content: ""; position: absolute; left: 1px; top: 0; width: 1px; height: 3px; background: #fff; }
.charttabs { height: 25px; margin-top: 1px; padding-left: 5px; border-bottom: 1px solid #a5a5a5; }
.charttabs button { padding: 0 12px; }
.charttabs .active { padding: 0 11px; }
.pager { margin-left: auto; display: flex; gap: 14px; padding: 5px 8px 0 0; }
.pager i { border: 4px solid transparent; height: 0; }
.pager .prev { border-right-color: #888; border-left: 0; }
.pager .next { border-left-color: #888; border-right: 0; }

.terminal { position: relative; flex: 1; min-height: 0; display: flex; border-bottom: 1px solid #a0a0a0; }
.rail { flex: none; width: 15px; display: flex; flex-direction: column; align-items: center; background: linear-gradient(#d4e4f2, #c2cfdf) 1px 14px / 13px 100% no-repeat; padding-bottom: 5px; }
.rail button { height: 13px; display: grid; place-items: center; }
.rail span { margin-top: auto; writing-mode: vertical-rl; text-orientation: sideways; transform: rotate(180deg); color: #44566b; line-height: 14px; }
.pane { flex: 1; min-width: 0; display: flex; flex-direction: column; padding: 0 3px 5px 0; }
.sheet { flex: 1; background: #fff; border: solid #8f8f8f; border-width: 1px 0 0 1px; }
.sheet table { width: 100%; color: #111; }
.sheet th { height: 25px; padding-right: 5px; text-align: right; border: solid #d8dbe0; border-width: 0 1px 2px 0; }
.sheet th:first-child { text-align: left; padding-left: 6px; }
em { font-size: 10px; margin-left: 12px; color: #777; }
.sheet td { height: 21px; padding: 0 3px 0 0; line-height: 18px; text-align: right; border: solid #bdbdbd; border-width: 0 1px 1px 0; }
.sheet td:first-child { text-align: left; padding-left: 3px; }
.sheet td:last-child { border-right: 0; padding-right: 4px; }
.sheet td svg { float: left; margin: 1px 5px 0 0; }
.sheet tr:nth-child(2) td { background: #ebebeb; }
.sheet .sum td { background: #c8c8c8; border-color: #c8c8c8; font-weight: 700; }
.sum span { margin-right: 11px; }
.stamp { position: absolute; left: 62%; top: 100px; margin-left: 10px; width: 368px; height: 122px; transform: rotate(-15deg); border: 5px solid #c8324f; border-radius: 4px; padding: 5px; opacity: .18; }
.stamp div { height: 100%; border: 2px solid #c8324f; color: #c8324f; font: 700 86px/96px "Noto Sans", sans-serif; text-align: center; }

.status { flex: none; display: flex; height: 24px; align-items: center; }
.help { flex: 1; padding-left: 2px; }
.cell { flex: none; height: 18px; border-left: 1px solid #999; padding-left: 5px; line-height: 18px; }
.net { width: 145px; display: flex; align-items: center; gap: 3px; }

.taskbar { flex: none; height: 7px; display: flex; align-items: flex-start; overflow: hidden; padding: 2px 0 0 14px; background: linear-gradient(#8f8279 1px, #4b372d 2px, #3b2921); }
.taskbar i { flex: none; display: block; height: 5px; }
.orb { width: 26px; border-radius: 13px 13px 0 0; background: #9fb6c6; }
.pin { border-radius: 8px 8px 0 0; }
.gold { width: 12px; margin-left: 53px; background: #b08b26; }
.folder { width: 14px; margin-left: 34px; background: #b19a62; }
.leaf { width: 18px; margin-left: 118px; background: #7cb94b; }
.orange { width: 30px; margin-left: 34px; background: #e8571d; }
.white { width: 18px; margin-left: 38px; background: #e5e5e5; }
.task { width: 158px; height: 5px; margin-left: 24px; background: #aaa5a2; padding-left: 11px; }
.task i { width: 30px; background: #2199d8; }
.clock { margin-left: auto; margin-right: 20px; color: #fff; line-height: 14px; }
.desk { width: 16px; background: #77706c; border: 1px solid #aaa; }
</style>
